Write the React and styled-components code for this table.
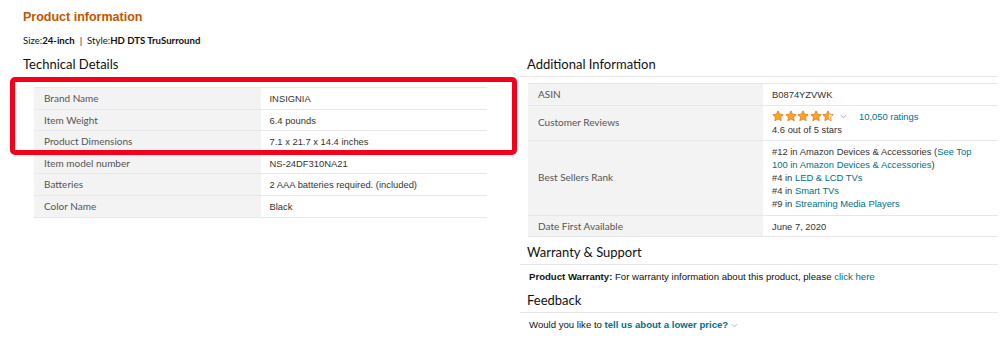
import React from "react";
import styled, { createGlobalStyle } from "styled-components";

const GlobalStyle = createGlobalStyle`
  body {
    margin: 0;
    background: #fff;
    font-family: "Liberation Sans", Arial, sans-serif;
  }
`;

const Page = styled.div`
  width: 1000px;
  padding-top: 9px;
`;
const Top = styled.div`
  padding-left: 23px;
`;
const Title = styled.h2`
  margin: 0;
  font-family: "Liberation Sans", Arial, sans-serif;
  font-size: 12.5px;
  line-height: 16px;
  font-weight: bold;
  color: #c45500;
`;
const Variation = styled.div`
  margin-top: 9px;
  font-family: "Lato", "Liberation Sans", sans-serif;
  font-size: 9.6px;
  line-height: 14px;
  color: #111;
  b {
    font-weight: bold;
  }
`;
const Columns = styled.div`
  display: flex;
  margin-top: 8px;
`;
const LeftCol = styled.div`
  position: relative;
  width: 520px;
  padding-left: 23px;
  box-sizing: border-box;
`;
const RightCol = styled.div`
  width: 478px;
`;
const Heading = styled.h3`
  margin: 0;
  font-family: "Lato", "Liberation Sans", sans-serif;
  font-size: 13px;
  line-height: 16px;
  font-weight: normal;
  color: #0f1111;
  padding-left: ${(p) => (p.$ruled ? "7px" : "0")};
  padding-bottom: ${(p) => (p.$ruled ? "4px" : "0")};
  border-bottom: ${(p) => (p.$ruled ? "1px solid #e7e7e7" : "none")};
  margin-top: ${(p) => p.$top || 0}px;
`;
const Table = styled.table`
  border-collapse: collapse;
  width: ${(p) => p.$w}px;
  margin-top: ${(p) => p.$top}px;
  margin-left: ${(p) => p.$left}px;
  border-top: 1px solid #e7e7e7;
`;
const Row = styled.tr`
  border-bottom: 1px solid #e7e7e7;
`;
const Label = styled.th`
  width: 50%;
  background: #f3f3f3;
  text-align: left;
  font-family: "Lato", "Liberation Sans", sans-serif;
  font-weight: normal;
  font-size: 10px;
  line-height: 13px;
  color: #555;
  padding: 4px 10px 3.6px;
  vertical-align: middle;
`;
const Value = styled.td`
  font-family: "Liberation Sans", Arial, sans-serif;
  font-size: 9.4px;
  line-height: ${(p) => p.$lh || 13}px;
  color: #333;
  padding: 4px 9px ${(p) => p.$pb || 3.6}px;
  vertical-align: middle;
`;
const Link = styled.a`
  color: #007185;
  text-decoration: none;
  font-weight: ${(p) => (p.$bold ? "bold" : "normal")};
`;
const StarLine = styled.div`
  display: flex;
  align-items: center;
  gap: 6px;
  height: 13px;
`;
const Stars = styled.span`
  display: inline-flex;
  gap: 0.5px;
`;
const Ratings = styled(Link)`
  margin-left: 6px;
`;
const Note = styled.div`
  font-family: "Liberation Sans", Arial, sans-serif;
  font-size: 9.6px;
  line-height: 14px;
  color: #111;
  padding-left: 9px;
  margin-top: ${(p) => p.$top}px;
  display: flex;
  align-items: center;
  gap: 3px;
  b {
    font-weight: bold;
  }
`;
const Highlight = styled.div`
  position: absolute;
  left: 10px;
  top: 21px;
  width: 507px;
  height: 78px;
  box-sizing: border-box;
  border: 5px solid #f5001b;
  border-radius: 5px;
  pointer-events: none;
`;

const Star = ({ fill = 1, id }) => (
  <svg width="12" height="12" viewBox="0 0 24 24">
    <defs>
      <linearGradient id={id}>
        <stop offset={fill} stopColor="#ffa41c" />
        <stop offset={fill} stopColor="#fff" />
      </linearGradient>
    </defs>
    <path
      d="M12 1.8l3.1 6.6 7.2.9-5.3 5 1.4 7.1L12 17.9l-6.4 3.5L7 14.3l-5.3-5 7.2-.9z"
      fill={`url(#${id})`}
      stroke="#de7921"
      strokeWidth="1.6"
      strokeLinejoin="round"
    />
  </svg>
);

const Chevron = ({ color = "#999" }) => (
  <svg width="7" height="5" viewBox="0 0 8 5">
    <path d="M1 1l3 3 3-3" fill="none" stroke={color} strokeWidth="1" />
  </svg>
);

const techDetails = [
  ["Brand Name", "INSIGNIA"],
  ["Item Weight", "6.4 pounds"],
  ["Product Dimensions", "7.1 x 21.7 x 14.4 inches"],
  ["Item model number", "NS-24DF310NA21"],
  ["Batteries", "2 AAA batteries required. (included)"],
  ["Color Name", "Black"],
];

export default function App() {
  return (
    <Page>
      <GlobalStyle />
      <Top>
        <Title>Product information</Title>
        <Variation>
          Size:<b>24-inch</b>&nbsp; | &nbsp;Style:<b>HD DTS TruSurround</b>
        </Variation>
      </Top>
      <Columns>
        <LeftCol>
          <Heading>Technical Details</Heading>
          <Table $w={453} $top={15} $left={11}>
            <tbody>
              {techDetails.map(([k, v]) => (
                <Row key={k}>
                  <Label>{k}</Label>
                  <Value>{v}</Value>
                </Row>
              ))}
            </tbody>
          </Table>
          <Highlight />
        </LeftCol>
        <RightCol>
          <Heading $ruled>Additional Information</Heading>
          <Table $w={470} $top={6} $left={8}>
            <tbody>
              <Row>
                <Label>ASIN</Label>
                <Value>B0874YZVWK</Value>
              </Row>
              <Row>
                <Label>Customer Reviews</Label>
                <Value $pb={4}>
                  <StarLine>
                    <Stars>
                      <Star id="s1" />
                      <Star id="s2" />
                      <Star id="s3" />
                      <Star id="s4" />
                      <Star id="s5" fill={0.55} />
                    </Stars>
                    <Chevron />
                    <Ratings href="#">10,050 ratings</Ratings>
                  </StarLine>
                  4.6 out of 5 stars
                </Value>
              </Row>
              <Row>
                <Label>Best Sellers Rank</Label>
                <Value $lh={13.2} $pb={4}>
                  #12 in Amazon Devices &amp; Accessories (
                  <Link href="#">See Top 100 in Amazon Devices &amp; Accessories</Link>)
                  <br />
                  #4 in <Link href="#">LED &amp; LCD TVs</Link>
                  <br />
                  #4 in <Link href="#">Smart TVs</Link>
                  <br />
                  #9 in <Link href="#">Streaming Media Players</Link>
                </Value>
              </Row>
              <Row>
                <Label>Date First Available</Label>
                <Value>June 7, 2020</Value>
              </Row>
            </tbody>
          </Table>
          <Heading $ruled $top={7}>Warranty &amp; Support</Heading>
          <Note $top={5}>
            <span>
              <b>Product Warranty:</b> For warranty information about this product, please{" "}
              <Link href="#">click here</Link>
            </span>
          </Note>
          <Heading $ruled $top={8}>Feedback</Heading>
          <Note $top={5}>
            <span>
              Would you like to <Link href="#" $bold>tell us about a lower price?</Link>
            </span>
            <Chevron color="#aaa" />
          </Note>
        </RightCol>
      </Columns>
    </Page>
  );
}
